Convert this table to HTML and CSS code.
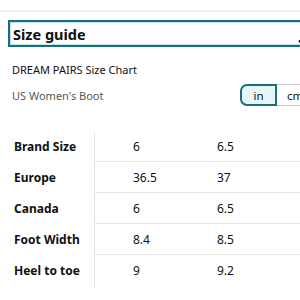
FILE: index.html
```html
<!DOCTYPE html>
<html>
<head>
<meta charset="utf-8">
<link rel="stylesheet" href="styles.css">
</head>
<body>
<div class="topbar"></div>
<div class="select">
  <span class="select-label">Size guide</span>
  <svg class="caret" width="10" height="8" viewBox="0 0 10 8"><path d="M1 6 L5 2 L9 6" fill="none" stroke="#111" stroke-width="2"/></svg>
</div>
<div class="chart-title">DREAM PAIRS Size Chart</div>
<div class="sub-row">
  <span class="subtitle">US Women's Boot</span>
  <div class="toggle">
    <span class="tog tog-on">in</span>
    <span class="tog tog-off">cm</span>
  </div>
</div>
<div class="table">
  <div class="labels">
    <div class="cell label">Brand Size</div>
    <div class="cell label">Europe</div>
    <div class="cell label">Canada</div>
    <div class="cell label">Foot Width</div>
    <div class="cell label">Heel to toe</div>
  </div>
  <div class="values">
    <div class="vrow"><span class="v1">6</span><span class="v2">6.5</span></div>
    <div class="vrow"><span class="v1">36.5</span><span class="v2">37</span></div>
    <div class="vrow"><span class="v1">6</span><span class="v2">6.5</span></div>
    <div class="vrow"><span class="v1">8.4</span><span class="v2">8.5</span></div>
    <div class="vrow last"><span class="v1">9</span><span class="v2">9.2</span></div>
  </div>
</div>
</body>
</html>
```
FILE: styles.css
```css
html, body {
  margin: 0;
  padding: 0;
  background: #fff;
  width: 300px;
  height: 300px;
  overflow: hidden;
  font-family: "Noto Sans", "Open Sans", Arial, sans-serif;
  color: #0f1111;
}
.topbar {
  height: 10px;
  border-bottom: 2px solid #eeeeee;
}
.select {
  position: relative;
  margin: 8px 0 0 8px;
  width: 300px;
  height: 23px;
  border: 2px solid #1b6e78;
  box-shadow: inset 0 0 0 1px #bfe6ea;
  display: flex;
  align-items: center;
  padding-left: 3px;
}
.select-label {
  font-size: 14.5px;
  font-weight: 700;
  line-height: 18px;
}
.caret {
  position: absolute;
  left: 288px;
  top: 14px;
}
.chart-title {
  margin: 16px 0 0 12px;
  font-size: 11px;
  line-height: 14px;
}
.sub-row {
  display: flex;
  align-items: center;
  justify-content: space-between;
  margin: 6px 0 0 12px;
  height: 24px;
}
.subtitle {
  font-size: 11px;
  color: #565959;
}
.toggle {
  display: flex;
  width: 70px;
  height: 22px;
  margin-right: -10px;
}
.tog {
  display: flex;
  align-items: center;
  justify-content: center;
  font-size: 11.5px;
  box-sizing: border-box;
  height: 22px;
}
.tog-on {
  width: 37px;
  border: 2px solid #1b6e78;
  border-radius: 7px 0 0 7px;
  background: #e6f6f8;
}
.tog-off {
  width: 33px;
  border: 1px solid #c8cccc;
  border-left: none;
  justify-content: flex-start;
  padding-left: 10px;
}
.table {
  display: flex;
  margin-top: 24px;
}
.labels {
  width: 94px;
  border-right: 1px solid #e7e7e7;
  height: 157px;
}
.cell {
  height: 31px;
  display: flex;
  align-items: center;
  padding-left: 14px;
}
.label {
  font-size: 12px;
  font-weight: 700;
}
.values {
  flex: 1;
}
.vrow {
  height: 30px;
  border-bottom: 1px solid #e7e7e7;
  display: flex;
  align-items: center;
  font-size: 12px;
}
.vrow.last {
  border-bottom: none;
}
.v1 {
  margin-left: 38px;
  width: 84px;
}
```
